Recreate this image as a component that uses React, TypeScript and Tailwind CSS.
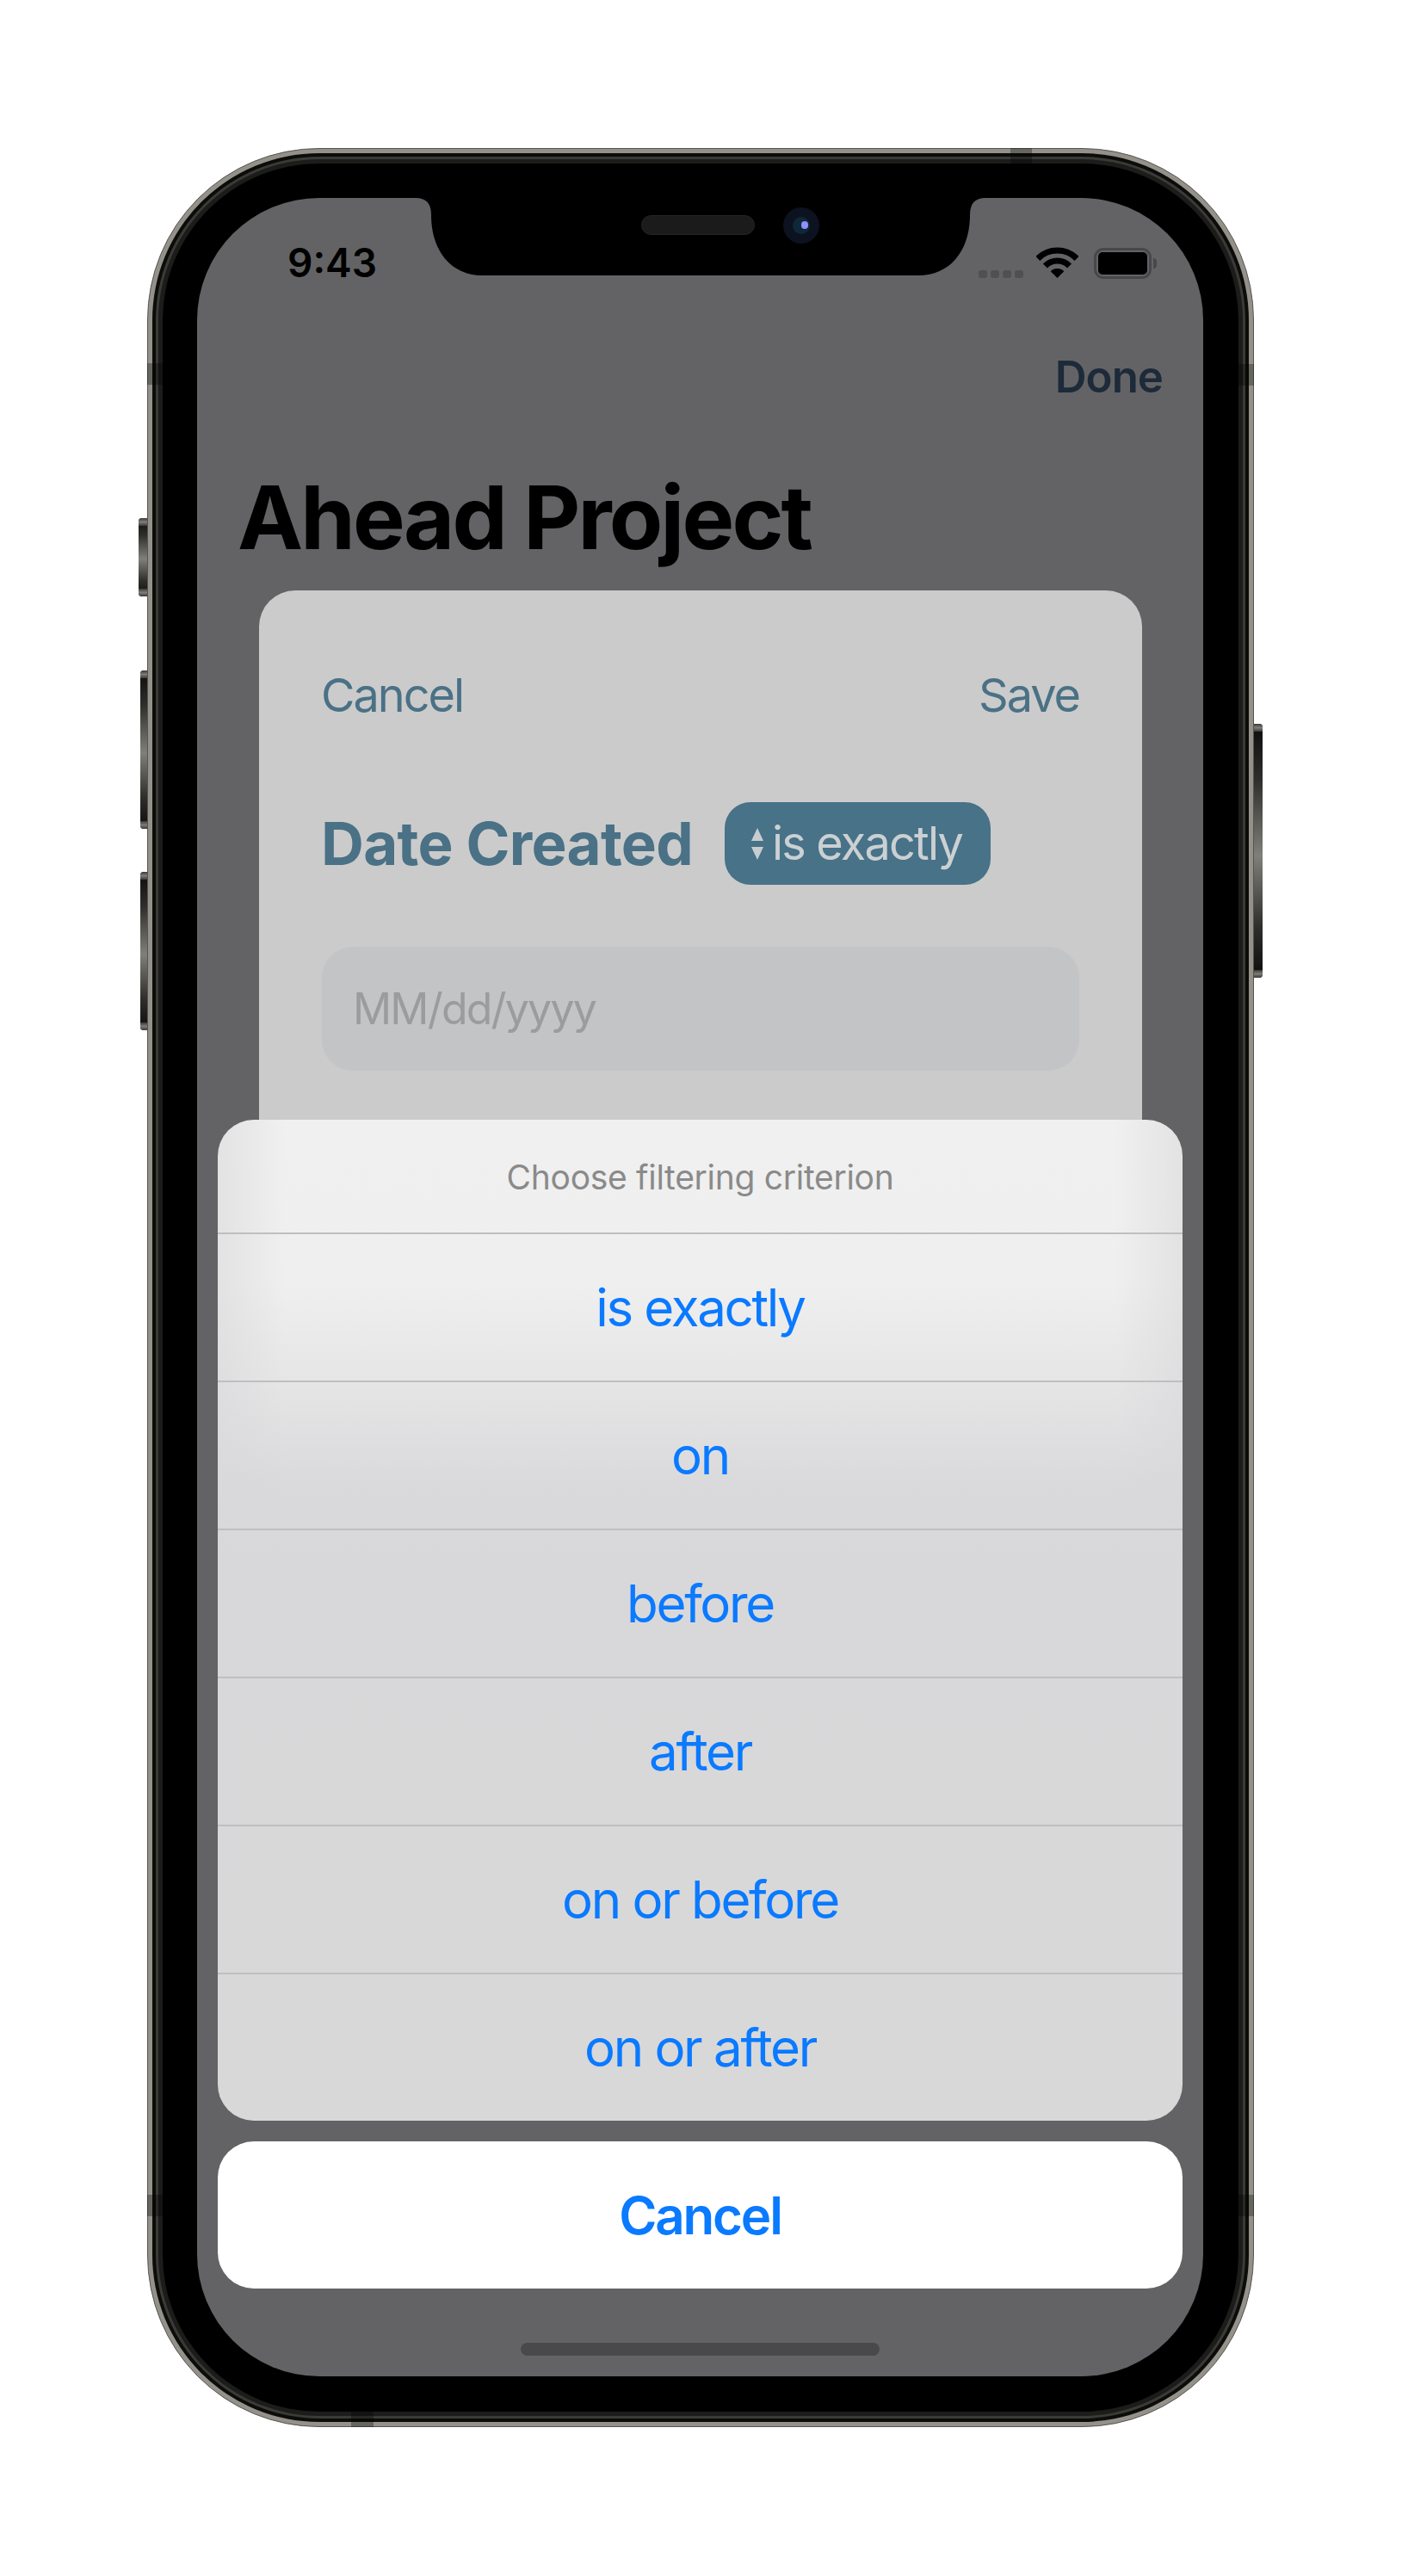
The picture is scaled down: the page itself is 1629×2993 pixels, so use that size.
import React from "react";

const font = { fontFamily: "Inter, 'Liberation Sans', sans-serif" };
const options = ["is exactly", "on", "before", "after", "on or before", "on or after"];

function SideButton({ className }: { className: string }) {
  return (
    <div className={`absolute flex flex-col justify-between overflow-hidden bg-[linear-gradient(to_bottom,#0c0c0c_0%,#2e2e2c_22%,#80807a_52%,#2e2e2c_80%,#0c0c0c_100%)] ${className}`}>
      <div className="h-[9px] bg-[linear-gradient(to_bottom,#3a3a38,#7d7d78,#3a3a38)]" />
      <div className="h-[9px] bg-[linear-gradient(to_bottom,#3a3a38,#7d7d78,#3a3a38)]" />
    </div>
  );
}

function Band({ className }: { className: string }) {
  return <div className={`absolute bg-[#000000]/30 ${className}`} />;
}

function Wifi() {
  return (
    <svg width="49" height="36" viewBox="0 0 49 36" className="mb-[1px]">
      <path d="M1.9 13.4A32 32 0 0 1 47.1 13.4" fill="none" stroke="#000" strokeWidth="7" />
      <path d="M10.4 21.9A20 20 0 0 1 38.6 21.9" fill="none" stroke="#000" strokeWidth="7" />
      <path d="M24.5 36L16.7 28.2A11 11 0 0 1 32.3 28.2Z" fill="#000" />
    </svg>
  );
}

function Battery() {
  return (
    <div className="flex items-center">
      <div className="box-border h-[36px] w-[67px] rounded-[11px] border-[3px] border-[#48484a] p-[2px]">
        <div className="h-full w-full rounded-[5px] bg-black" />
      </div>
      <div className="ml-[2px] h-[12px] w-[4px] rounded-r-[4px] bg-[#48484a]" />
    </div>
  );
}

export default function App() {
  return (
    <div className="flex h-[2993px] w-[1629px] justify-center bg-white pt-[172px] pr-[1px]" style={font}>
      <div className="relative h-[2648px] w-[1286px]">
        <SideButton className="left-[-10px] top-[430px] h-[91px] w-[11px] rounded-l-[4px]" />
        <SideButton className="left-[-8px] top-[607px] h-[184px] w-[9px] rounded-l-[4px]" />
        <SideButton className="left-[-8px] top-[841px] h-[184px] w-[9px] rounded-l-[4px]" />
        <SideButton className="right-[-10px] top-[669px] h-[295px] w-[10px] rounded-r-[4px]" />

        <div className="relative h-full w-full rounded-[200px] border border-[#55544f] bg-[#93918a] p-[5px]">
          <div className="h-full w-full rounded-[194px] bg-[#0c0c0a] p-[4px]">
            <div className="h-full w-full rounded-[190px] bg-[#3a3a37] p-[3px]">
              <div className="h-full w-full rounded-[187px] bg-[#1c1c1a] p-[5px]">
                <div className="h-full w-full rounded-[182px] bg-black px-[40px] pt-[40px] pb-[41px]">
                  <div className="relative h-[2531px] w-[1169px] overflow-hidden rounded-[142px] bg-[#636365]">
                    <div className="flex h-[150px] items-center justify-between pl-[105px] pr-[54px]">
                      <span className="text-[46px] font-semibold leading-[46px] text-black">9:43</span>
                      <div className="flex items-end">
                        <div className="mb-[1px] flex gap-[4px]">
                          <div className="h-[9px] w-[10px] rounded-[3px] bg-[#505052]" />
                          <div className="h-[9px] w-[10px] rounded-[3px] bg-[#505052]" />
                          <div className="h-[9px] w-[10px] rounded-[3px] bg-[#505052]" />
                          <div className="h-[9px] w-[10px] rounded-[3px] bg-[#505052]" />
                        </div>
                        <div className="ml-[15px]"><Wifi /></div>
                        <div className="ml-[18px]"><Battery /></div>
                      </div>
                    </div>

                    <div className="flex h-[114px] items-center justify-end pr-[47px]">
                      <span className="text-[51px] font-semibold leading-[51px] tracking-[-1px] text-[#1c2a3a]">Done</span>
                    </div>

                    <h1 className="ml-[47px] mt-[56px] text-[102px] font-bold leading-[102px] tracking-[-2.8px] text-black">Ahead Project</h1>

                    <div className="ml-[72px] mr-[71px] mt-[34px] h-[900px] rounded-[42px] bg-[#cbcbcb] pl-[72px] pr-[73px] pt-[95px]">
                      <div className="flex justify-between text-[54px] leading-[54px] tracking-[-2px] text-[#4a7186]">
                        <span>Cancel</span>
                        <span>Save</span>
                      </div>
                      <div className="mt-[97px] flex items-center">
                        <span className="w-[469px] whitespace-nowrap text-[69px] font-bold leading-[69px] tracking-[-0.7px] text-[#4a7186]">Date Created</span>
                        <div className="flex h-[96px] w-[309px] items-center gap-[9px] rounded-[30px] bg-[#477287] pl-[30px]">
                          <svg width="16" height="37" viewBox="0 0 16 37">
                            <polygon points="8,0 15,15 1,15" fill="#c8cdd0" />
                            <polygon points="1,22 15,22 8,37" fill="#c8cdd0" />
                          </svg>
                          <span className="text-[54px] leading-[54px] tracking-[-1.8px] text-[#cbd0d3]">is exactly</span>
                        </div>
                      </div>
                      <div className="ml-[1px] mt-[72px] flex h-[144px] items-center rounded-[36px] bg-[#c3c4c6] px-[36px]">
                        <span className="text-[50px] leading-[50px] tracking-[-1.8px] text-[#9c9c9e]">MM/dd/yyyy</span>
                      </div>
                    </div>

                    <svg width="662" height="90" viewBox="0 0 662 90" className="absolute left-[254px] top-0">
                      <path d="M0 0C12 0 18 6 18 20C18 60 40 90 78 90H584C622 90 644 60 644 20C644 6 650 0 662 0Z" fill="#000" />
                    </svg>
                    <div className="absolute left-[516px] top-[20px] h-[23px] w-[132px] rounded-full border border-[#262626] bg-[#1b1b1b]" />
                    <div className="absolute left-[681px] top-[11px] flex h-[42px] w-[42px] items-center justify-center rounded-full bg-[#0d1220]">
                      <div className="relative h-[20px] w-[20px] rounded-full bg-[#0f2838]">
                        <div className="absolute right-[2px] top-[5px] h-[9px] w-[8px] rounded-full bg-[#8f8fff]" />
                      </div>
                    </div>

                    <div className="absolute inset-x-[24px] top-[1071px] flex flex-col gap-[24px]">
                      <div className="overflow-hidden rounded-[42px] bg-[linear-gradient(to_right,rgba(216,216,218,0.55),rgba(216,216,218,0)_7%,rgba(216,216,218,0)_93%,rgba(216,216,218,0.55)),linear-gradient(to_bottom,#f0f0f0_0px,#efefef_190px,#e6e6e7_300px,#dadadc_420px,#d8d8da_520px,#d8d8d8_100%)]">
                        <div className="flex h-[131px] items-center justify-center pt-[2px] text-[39px] leading-[39px] tracking-[-0.3px] text-[#8a8a8a]">Choose filtering criterion</div>
                        {options.map((o) => (
                          <div key={o} className="box-border flex h-[172px] items-center justify-center border-t-2 border-[#bfbfc1] text-[60px] leading-[60px] tracking-[-2.3px] text-[#0a7aff]">{o}</div>
                        ))}
                      </div>
                      <div className="flex h-[171px] items-center justify-center rounded-[42px] bg-white text-[60px] font-semibold leading-[60px] tracking-[-2.2px] text-[#0a7aff]">Cancel</div>
                    </div>

                    <div className="absolute bottom-[24px] left-[376px] h-[15px] w-[417px] rounded-full bg-[#49494b]" />
                  </div>
                </div>
              </div>
            </div>
          </div>
        </div>

        <Band className="left-[1003px] top-0 h-[18px] w-[25px]" />
        <Band className="left-[237px] bottom-0 h-[18px] w-[26px]" />
        <Band className="left-0 top-[250px] h-[25px] w-[18px]" />
        <Band className="right-0 top-[251px] h-[25px] w-[18px]" />
        <Band className="left-0 top-[2378px] h-[25px] w-[18px]" />
        <Band className="right-0 top-[2378px] h-[25px] w-[18px]" />
      </div>
    </div>
  );
}
